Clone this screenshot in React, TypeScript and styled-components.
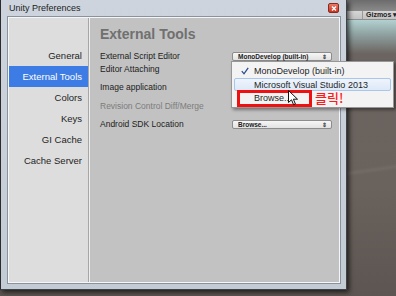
import styled, { createGlobalStyle } from 'styled-components';

const GlobalStyle = createGlobalStyle`
  html, body {
    margin: 0;
    padding: 0;
    background: #5a534e;
  }
  * {
    box-sizing: border-box;
  }
`;

const menuItems = ['General', 'External Tools', 'Colors', 'Keys', 'GI Cache', 'Cache Server'];

const App = () => {
  return (
    <>
      <GlobalStyle />
      <Desktop>
        <Scene>
          <SceneTop />
          <SceneToolbar>
            <ToolbarSep />
            <Gizmos>Gizmos ▾</Gizmos>
          </SceneToolbar>
          <SceneView />
        </Scene>

        <Window>
          <TitleBar>
            <TitleText>Unity Preferences</TitleText>
            <CloseButton>
              <svg width="6" height="5" viewBox="0 0 6 5">
                <path d="M1 0.5 L5 4.5 M5 0.5 L1 4.5" stroke="#fff" strokeWidth="1.4" />
              </svg>
            </CloseButton>
          </TitleBar>
          <Body>
            <Sidebar>
              {menuItems.map((m) => (
                <SideItem key={m} $active={m === 'External Tools'}>
                  {m}
                </SideItem>
              ))}
            </Sidebar>
            <Content>
              <Heading>External Tools</Heading>
              <Row $top={8}>
                <Label>External Script Editor</Label>
                <Dropdown>
                  <span>MonoDevelop (built-in)</span>
                  <Arrows>⇕</Arrows>
                </Dropdown>
              </Row>
              <Row $top={3}>
                <Label>Editor Attaching</Label>
              </Row>
              <Row $top={8}>
                <Label>Image application</Label>
              </Row>
              <Row $top={9}>
                <Label $disabled>Revision Control Diff/Merge</Label>
              </Row>
              <Row $top={8}>
                <Label>Android SDK Location</Label>
                <Dropdown>
                  <span>Browse...</span>
                  <Arrows>⇕</Arrows>
                </Dropdown>
              </Row>
            </Content>
          </Body>
        </Window>

        <PopupMenu>
          <MenuItem>
            <Check>
              <svg width="8" height="8" viewBox="0 0 8 8">
                <path d="M0.8 4.2 L3 6.8 L7.2 0.8" fill="none" stroke="#2a4c8c" strokeWidth="1.3" />
              </svg>
            </Check>
            MonoDevelop (built-in)
          </MenuItem>
          <MenuItem $hover>
            <Check />
            Microsoft Visual Studio 2013
          </MenuItem>
          <MenuItem>
            <Check />
            Browse...
          </MenuItem>
        </PopupMenu>

        <Highlight />
        <ClickNote>클릭!</ClickNote>
        <Cursor>
          <svg width="11" height="16" viewBox="0 0 11 16">
            <path
              d="M0.5 0.5 L0.5 12.5 L3.5 9.8 L5.6 14.8 L7.4 14 L5.4 9.2 L9.5 9.2 Z"
              fill="#fff"
              stroke="#111"
              strokeWidth="1"
              strokeLinejoin="round"
            />
          </svg>
        </Cursor>
      </Desktop>
    </>
  );
};

export default App;

const Desktop = styled.div`
  position: relative;
  width: 396px;
  height: 296px;
  overflow: hidden;
  font-family: 'Liberation Sans', Arial, sans-serif;
`;

const Scene = styled.div`
  display: flex;
  flex-direction: column;
  width: 100%;
  height: 100%;
`;

const SceneTop = styled.div`
  height: 11px;
  background: linear-gradient(#6c6c6c, #8a8a8a);
`;

const SceneToolbar = styled.div`
  height: 9px;
  display: flex;
  align-items: center;
  justify-content: flex-end;
  background: linear-gradient(#d6d6d6, #c2c2c2);
  border-bottom: 1px solid #8e8e8e;
`;

const ToolbarSep = styled.div`
  width: 1px;
  height: 100%;
  background: #9a9a9a;
  margin-right: 3px;
`;

const Gizmos = styled.span`
  font-size: 7px;
  font-weight: bold;
  color: #222;
  width: 30px;
  white-space: nowrap;
`;

const SceneView = styled.div`
  flex: 1;
  background:
    linear-gradient(172deg, transparent 60%, rgba(255, 255, 255, 0.05) 61%, transparent 62%),
    linear-gradient(180deg, #b3d1d1 0px, #8fa3a2 14px, #6b6460 34px, #6a625d 60%, #5c5551 100%);
`;

const Window = styled.div`
  position: absolute;
  left: 0;
  top: 0;
  width: 347px;
  height: 290px;
  display: flex;
  flex-direction: column;
  background: linear-gradient(#cdd4dd, #c3cbd5);
  border: 1px solid #3e4249;
  border-top: none;
  border-left-color: #2c2c2c;
  box-shadow: 2px 2px 5px rgba(0, 0, 0, 0.7);
  padding: 0 5px 5px 6px;
`;

const TitleBar = styled.div`
  height: 16px;
  display: flex;
  align-items: center;
  justify-content: space-between;
  padding-left: 2px;
  padding-right: 2px;
`;

const TitleText = styled.span`
  font-size: 9px;
  color: #1c1c1c;
`;

const CloseButton = styled.div`
  width: 11px;
  height: 10px;
  border-radius: 2px;
  background: linear-gradient(#e97a66, #c9331f);
  border: 1px solid #8a2a1f;
  display: flex;
  align-items: center;
  justify-content: center;
`;

const Body = styled.div`
  flex: 1;
  display: flex;
  border: 1px solid #8a929c;
  box-shadow: inset 0 0 0 1px #f4f6f8;
  padding: 1px;
`;

const Sidebar = styled.div`
  width: 80px;
  display: flex;
  flex-direction: column;
  background: #dddddd;
  padding-top: 27px;
  border-right: 1px solid #a6a6a6;
  box-shadow: 1px 0 0 #eeeeee;
`;

const SideItem = styled.div<{ $active?: boolean }>`
  height: 21px;
  display: flex;
  align-items: center;
  justify-content: flex-end;
  padding-right: 6px;
  font-size: 9.5px;
  color: ${(p) => (p.$active ? '#ffffff' : '#1e1e1e')};
  background: ${(p) => (p.$active ? '#3d7ce4' : 'transparent')};
`;

const Content = styled.div`
  flex: 1;
  display: flex;
  flex-direction: column;
  background: #c2c2c2;
  margin-left: 1px;
  padding: 8px 0 0 10px;
`;

const Heading = styled.div`
  font-size: 14px;
  font-weight: bold;
  color: #707070;
  height: 17px;
  line-height: 17px;
`;

const Row = styled.div<{ $top: number }>`
  display: flex;
  align-items: center;
  height: 10px;
  margin-top: ${(p) => p.$top}px;
`;

const Label = styled.span<{ $disabled?: boolean }>`
  width: 132px;
  font-size: 8.5px;
  color: ${(p) => (p.$disabled ? '#7c7c7c' : '#1c1c1c')};
  white-space: nowrap;
`;

const Dropdown = styled.div`
  width: 100px;
  height: 9px;
  display: flex;
  align-items: center;
  justify-content: space-between;
  padding: 0 4px 0 5px;
  border: 1px solid #8c8c8c;
  border-radius: 2px;
  background: linear-gradient(#f6f6f6, #e2e2e2);
  font-size: 6.5px;
  font-weight: bold;
  color: #222;
  white-space: nowrap;
`;

const Arrows = styled.span`
  font-size: 6px;
  color: #444;
`;

const PopupMenu = styled.div`
  position: absolute;
  left: 231px;
  top: 61px;
  width: 163px;
  height: 47px;
  display: flex;
  flex-direction: column;
  padding: 2px 2px;
  background: #f3f3f3;
  border: 1px solid #979797;
  box-shadow: 2px 2px 3px rgba(0, 0, 0, 0.4);
`;

const MenuItem = styled.div<{ $hover?: boolean }>`
  height: ${(p) => (p.$hover ? '13px' : '14px')};
  display: flex;
  align-items: center;
  font-size: 9px;
  color: #1e1e1e;
  white-space: nowrap;
  border: 1px solid ${(p) => (p.$hover ? '#a9c6ec' : 'transparent')};
  border-radius: 2px;
  background: ${(p) => (p.$hover ? 'linear-gradient(#eef4fc, #dde9f8)' : 'transparent')};
`;

const Check = styled.span`
  width: 19px;
  display: flex;
  justify-content: center;
`;

const Highlight = styled.div`
  position: absolute;
  left: 237px;
  top: 90px;
  width: 75px;
  height: 17px;
  border: 3px solid #ee1111;
`;

const ClickNote = styled.div`
  position: absolute;
  left: 315px;
  top: 89px;
  font-family: 'Noto Sans CJK KR', sans-serif;
  font-size: 13px;
  font-weight: 500;
  line-height: 18px;
  color: #ff1a1a;
`;

const Cursor = styled.div`
  position: absolute;
  left: 288px;
  top: 90px;
  width: 11px;
  height: 16px;
  display: flex;
`;
